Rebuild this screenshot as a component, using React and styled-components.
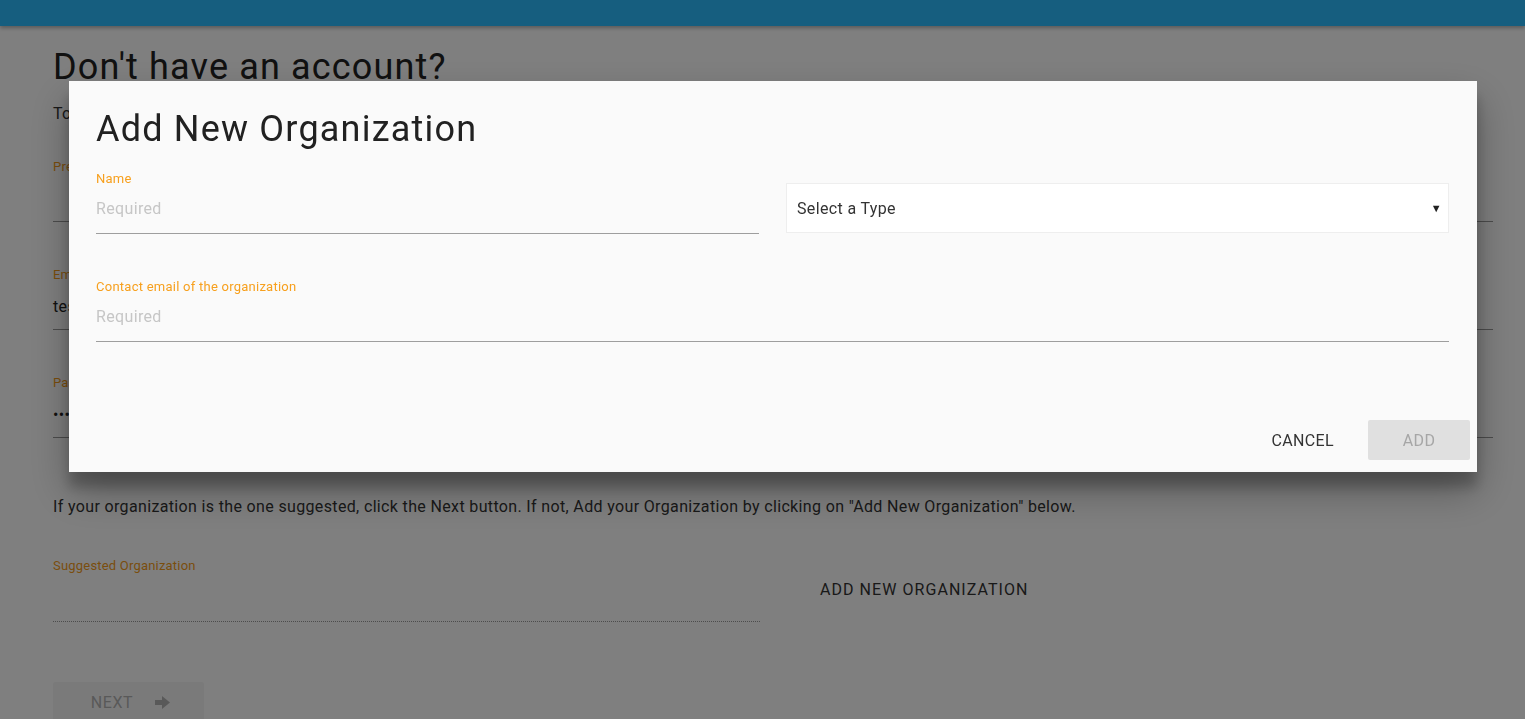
import React from "react";
import styled, { createGlobalStyle } from "styled-components";

const GlobalStyle = createGlobalStyle`
  html, body {
    margin: 0;
    padding: 0;
    background: #ffffff;
    font-family: Roboto, "Liberation Sans", Arial, sans-serif;
    overflow: hidden;
  }
`;

const Page = styled.div`
  width: 1525px;
  height: 719px;
  overflow: hidden;
  background: #fff;
`;

const Header = styled.header`
  height: 26px;
  background: #2dbdff;
  box-shadow: 0 2px 4px rgba(0, 0, 0, 0.3);
`;

const Content = styled.main`
  padding: 20px 32px 0 53px;
  display: flex;
  flex-direction: column;
`;

const PageTitle = styled.h1`
  margin: 0;
  font-size: 36px;
  font-weight: 400;
  line-height: 42px;
  letter-spacing: 1.15px;
  color: #222;
`;

const Intro = styled.p`
  margin: 16px 0 0;
  font-size: 16px;
  line-height: 20px;
  letter-spacing: 0.35px;
  color: #333;
`;

const PageField = styled.div`
  display: flex;
  flex-direction: column;
  margin-top: ${(p) => p.$top}px;
  width: ${(p) => p.$width || "100%"};
`;

const PageLabel = styled.label`
  font-size: 13px;
  line-height: 16px;
  letter-spacing: 0.2px;
  color: #f59c1a;
`;

const PageValue = styled.div`
  height: ${(p) => p.$h || 46}px;
  display: flex;
  align-items: center;
  font-size: 16px;
  letter-spacing: 0.35px;
  color: #222;
  border-bottom: 1px ${(p) => (p.$dotted ? "dotted" : "solid")} #999;
  background: ${(p) => (p.$boxed ? "#fff" : "transparent")};
`;

const Hint = styled.p`
  margin: 59px 0 0;
  font-size: 16px;
  line-height: 20px;
  letter-spacing: 0.35px;
  color: #333;
`;

const SuggestRow = styled.div`
  display: flex;
  align-items: flex-end;
  gap: 44px;
`;

const FlatButton = styled.button`
  border: none;
  background: transparent;
  font-family: inherit;
  font-size: 16px;
  letter-spacing: 1.05px;
  color: #333;
  padding: 8px 16px;
  margin-bottom: 15px;
  cursor: pointer;
`;

const NextButton = styled.button`
  margin-top: 60px;
  width: 151px;
  height: 40px;
  border: none;
  border-radius: 2px;
  background: #f5f5f5;
  color: #b3b3b3;
  font-family: inherit;
  font-size: 16px;
  letter-spacing: 0.6px;
  display: flex;
  align-items: center;
  justify-content: center;
  gap: 22px;
  padding: 0 0 0 4px;
`;

const Overlay = styled.div`
  position: fixed;
  inset: 0;
  background: rgba(0, 0, 0, 0.5);
`;

const Dialog = styled.div`
  margin: 81px 0 0 69px;
  width: 1408px;
  background: #fafafa;
  box-shadow: 0 19px 38px rgba(0, 0, 0, 0.3), 0 15px 12px rgba(0, 0, 0, 0.22);
  display: flex;
  flex-direction: column;
`;

const DialogBody = styled.div`
  padding: 24px 28px 0 27px;
  display: flex;
  flex-direction: column;
`;

const DialogTitle = styled.h2`
  margin: 0;
  font-size: 36px;
  font-weight: 400;
  line-height: 48px;
  letter-spacing: 1.2px;
  color: #212121;
`;

const FieldRow = styled.div`
  display: grid;
  grid-template-columns: 1fr 1fr;
  gap: 27px;
  align-items: end;
  margin-top: 18px;
`;

const Field = styled.div`
  display: flex;
  flex-direction: column;
  margin-top: ${(p) => p.$top || 0}px;
`;

const Label = styled.label`
  font-size: 13px;
  line-height: 16px;
  letter-spacing: 0.25px;
  color: #f7a01e;
`;

const Input = styled.input`
  box-sizing: border-box;
  height: 47px;
  padding: 0 0 4px;
  border: none;
  border-bottom: 1px solid #9e9e9e;
  background: transparent;
  font-family: inherit;
  font-size: 16px;
  letter-spacing: 0.35px;
  color: #222;
  outline: none;
  &::placeholder {
    color: #c6c6c6;
  }
`;

const Select = styled.div`
  box-sizing: border-box;
  height: 50px;
  margin-bottom: 1px;
  background: #fff;
  border: 1px solid #eeeeee;
  display: flex;
  align-items: center;
  justify-content: space-between;
  padding: 0 6px 0 10px;
  font-size: 16px;
  letter-spacing: 0.35px;
  color: #333;
`;

const Caret = styled.span`
  font-size: 11px;
  color: #222;
`;

const Actions = styled.div`
  display: flex;
  justify-content: flex-end;
  align-items: center;
  gap: 18px;
  padding: 78px 7px 12px 0;
`;

const DialogButton = styled.button`
  height: 40px;
  min-width: ${(p) => p.$min || 88}px;
  padding: 0 16px;
  border: none;
  border-radius: 2px;
  background: ${(p) => (p.$disabled ? "#e0e0e0" : "transparent")};
  color: ${(p) => (p.$disabled ? "#a6a6a6" : "#333")};
  font-family: inherit;
  font-size: 16px;
  letter-spacing: 0.35px;
`;

const ArrowIcon = () => (
  <svg width="15" height="13" viewBox="0 0 15 13">
    <path d="M0 4h7V0l8 6.5-8 6.5V9H0z" fill="#b3b3b3" />
  </svg>
);

export default function App() {
  return (
    <>
      <GlobalStyle />
      <Page>
        <Header />
        <Content>
          <PageTitle>Don't have an account?</PageTitle>
          <Intro>To create an account, please fill in the form below.</Intro>
          <PageField $top={35}>
            <PageLabel>Preferred name</PageLabel>
            <PageValue $boxed />
          </PageField>
          <PageField $top={45}>
            <PageLabel>Email</PageLabel>
            <PageValue>test@example.com</PageValue>
          </PageField>
          <PageField $top={45}>
            <PageLabel>Password</PageLabel>
            <PageValue>••••••••</PageValue>
          </PageField>
          <Hint>
            If your organization is the one suggested, click the Next button. If not, Add your
            Organization by clicking on "Add New Organization" below.
          </Hint>
          <SuggestRow>
            <PageField $top={41} $width="707px">
              <PageLabel>Suggested Organization</PageLabel>
              <PageValue $h={47} $dotted />
            </PageField>
            <FlatButton>ADD NEW ORGANIZATION</FlatButton>
          </SuggestRow>
          <NextButton>
            NEXT <ArrowIcon />
          </NextButton>
        </Content>
      </Page>
      <Overlay>
        <Dialog>
          <DialogBody>
            <DialogTitle>Add New Organization</DialogTitle>
            <FieldRow>
              <Field>
                <Label>Name</Label>
                <Input placeholder="Required" />
              </Field>
              <Select>
                Select a Type <Caret>▼</Caret>
              </Select>
            </FieldRow>
            <Field $top={45}>
              <Label>Contact email of the organization</Label>
              <Input placeholder="Required" />
            </Field>
          </DialogBody>
          <Actions>
            <DialogButton>CANCEL</DialogButton>
            <DialogButton $disabled $min={102}>
              ADD
            </DialogButton>
          </Actions>
        </Dialog>
      </Overlay>
    </>
  );
}
